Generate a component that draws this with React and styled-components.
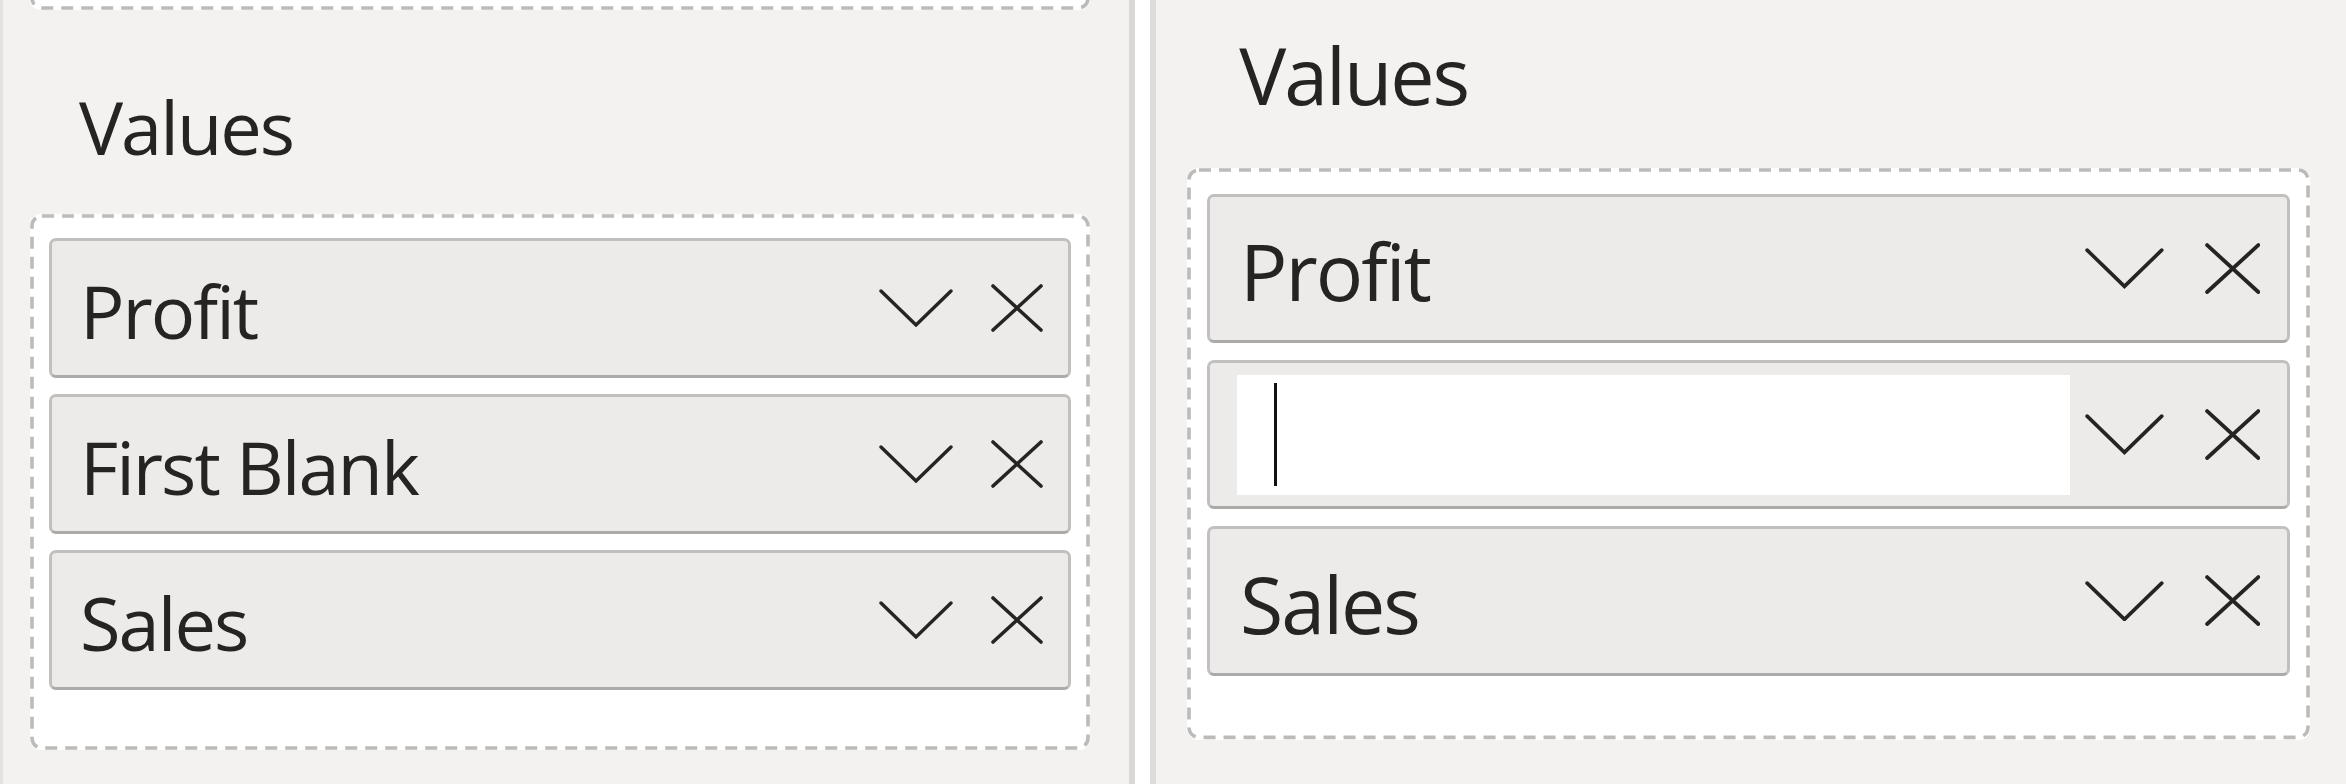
import React from 'react'
import styled, { createGlobalStyle, ThemeProvider } from 'styled-components';

// every size is written for the left pane, the right pane is the same UI a bit bigger
const u = (n) => ({ theme }) => `${(n * theme.s).toFixed(2)}px`;

const GlobalStyle = createGlobalStyle`
    html, body {
        margin: 0;
        padding: 0;
        background: #f3f2f1;
    }
    * {
        box-sizing: border-box;
    }
`

const Chevron = () => (
    <ChevronSvg viewBox="0 0 74 38" fill="none">
        <path d="M2 2 L37 36 L72 2" stroke="#252423" strokeWidth="3.4" strokeLinecap="round" strokeLinejoin="miter" />
    </ChevronSvg>
)

const Cross = () => (
    <CrossSvg viewBox="0 0 52 48" fill="none">
        <path d="M2 2 L50 46 M50 2 L2 46" stroke="#252423" strokeWidth="3.6" strokeLinecap="round" />
    </CrossSvg>
)

// the drop zone outline, longer dashes than a css dashed border gives
const DashedFrame = ({ openTop }) => (
    <FrameSvg aria-hidden="true">
        <FrameRect $openTop={openTop} />
    </FrameSvg>
)

const FieldRow = ({ name, editing }) => (
    <Row>
        {editing ? (
            <EditBox>
                <Caret />
            </EditBox>
        ) : (
            <FieldName>{name}</FieldName>
        )}
        <Actions>
            <Chevron />
            <Cross />
        </Actions>
    </Row>
)

const ValuesWell = ({ fields }) => (
    <>
        <Title>Values</Title>
        <Well>
            <DashedFrame />
            {fields.map((f, id) => (
                <FieldRow key={id} name={f.name} editing={f.editing} />
            ))}
        </Well>
    </>
)

const App = () => {
    const left = [{ name: 'Profit' }, { name: 'First Blank' }, { name: 'Sales' }];
    const right = [{ name: 'Profit' }, { editing: true }, { name: 'Sales' }];

    return (
        <Page>
            <GlobalStyle />
            <ThemeProvider theme={{ s: 1 }}>
                <LeftPane>
                    <PrevWell>
                        <DashedFrame openTop />
                    </PrevWell>
                    <ValuesWell fields={left} />
                </LeftPane>
            </ThemeProvider>
            <Divider />
            <ThemeProvider theme={{ s: 1.066 }}>
                <RightPane>
                    <ValuesWell fields={right} />
                </RightPane>
            </ThemeProvider>
        </Page>
    )
}

const Page = styled.div`
    display: flex;
    height: 784px;
    overflow: hidden;
    background: #f3f2f1;
    font-family: "Open Sans", "Noto Sans", sans-serif;
    color: #252423;
`

const LeftPane = styled.div`
    flex: none;
    width: 1129px;
    border-left: 3px solid #e4e2e0;
    padding: 0 39px 0 27px;

    & > h2 {
        margin-top: 80px;
    }
`

const RightPane = styled.div`
    flex: 1;
    padding: 36px 36px 0 31px;

    & > h2 {
        margin-top: 0;
    }
`

const Divider = styled.div`
    flex: none;
    width: 27px;
    background: #ffffff;
    border-left: 6px solid #dad8d6;
    border-right: 6px solid #dedcda;
`

const FrameSvg = styled.svg`
    position: absolute;
    inset: 0;
    width: 100%;
    height: 100%;
    overflow: hidden;
    pointer-events: none;
`

const FrameRect = styled.rect`
    x: 2px;
    y: ${(p) => (p.$openTop ? '-40px' : '2px')};
    width: calc(100% - 4px);
    height: ${(p) => (p.$openTop ? 'calc(100% + 38px)' : 'calc(100% - 4px)')};
    rx: 10px;
    fill: none;
    stroke: #bdbbb9;
    stroke-width: 3.6px;
    stroke-dasharray: 12px 8px;
`

const PrevWell = styled.div`
    position: relative;
    height: 10px;
    background: #ffffff;
    border-radius: 0 0 10px 10px;
`

const Title = styled.h2`
    margin: 0 0 ${u(50)} 0;
    padding-left: ${u(49)};
    font-size: ${u(74)};
    font-weight: 400;
    line-height: 1;
    letter-spacing: -2px;
`

const Well = styled.div`
    position: relative;
    display: flex;
    flex-direction: column;
    gap: ${u(16)};
    background: #ffffff;
    border-radius: 11px;
    padding: ${u(24)} ${u(19)} ${u(60)} ${u(19)};
`

const Row = styled.div`
    display: flex;
    align-items: center;
    height: ${u(140)};
    padding: 0 ${u(25)} 0 ${u(28)};
    background: #edebe9;
    border: 3px solid #c2c0be;
    border-bottom-color: #acaaa8;
    border-radius: 7px;
`

const FieldName = styled.span`
    flex: 1;
    padding-top: ${u(6)};
    font-size: ${u(74)};
    line-height: 1;
    letter-spacing: -2px;
    white-space: nowrap;
`

const EditBox = styled.div`
    flex: 1;
    align-self: stretch;
    display: flex;
    align-items: center;
    margin: ${u(11)} ${u(14)} ${u(11)} ${u(-3)};
    padding-left: ${u(35)};
    background: #ffffff;
`

const Caret = styled.span`
    display: block;
    width: 3px;
    height: ${u(96)};
    background: #111111;
`

const Actions = styled.div`
    flex: none;
    display: flex;
    align-items: center;
    gap: ${u(38)};
`

const ChevronSvg = styled.svg`
    display: block;
    width: ${u(74)};
    height: ${u(38)};
`

const CrossSvg = styled.svg`
    display: block;
    width: ${u(52)};
    height: ${u(48)};
`

export default App
